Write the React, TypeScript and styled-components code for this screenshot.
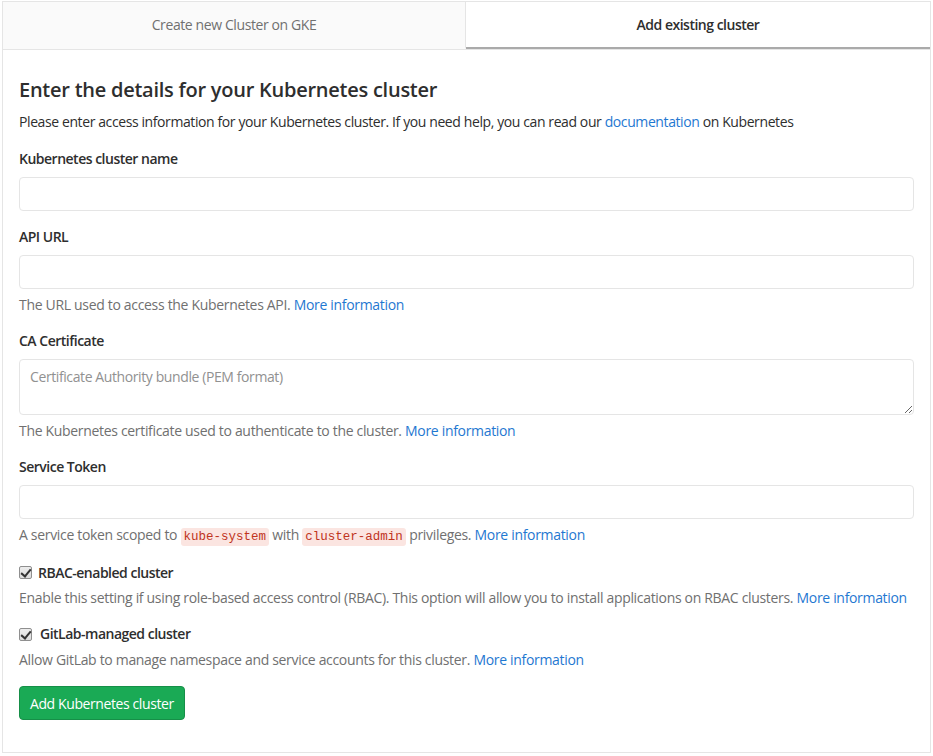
import React from "react";
import styled, { createGlobalStyle } from "styled-components";

const Global = createGlobalStyle`
  body {
    margin: 0;
    background: #fff;
    font-family: "Open Sans", "Noto Sans", sans-serif;
    letter-spacing: -0.4px;
  }
  * { box-sizing: border-box; }
`;

const Card = styled.div`
  margin: 1px 2px 0 2px;
  width: 929px;
  border: 1px solid #e5e5e5;
  background: #fff;
`;

const Tabs = styled.div`
  display: grid;
  grid-template-columns: 463px 1fr;
  border-bottom: 1px solid #e5e5e5;
`;

const Tab = styled.div<{ $active?: boolean }>`
  height: 47px;
  display: flex;
  align-items: center;
  justify-content: center;
  font-size: 14px;
  color: ${(p) => (p.$active ? "#2e2e2e" : "#707070")};
  font-weight: ${(p) => (p.$active ? 600 : 400)};
  letter-spacing: ${(p) => (p.$active ? "-0.5px" : "-0.4px")};
  background: ${(p) => (p.$active ? "#fff" : "#fafafa")};
  border-right: ${(p) => (p.$active ? "none" : "1px solid #e5e5e5")};
  border-bottom: 2px solid ${(p) => (p.$active ? "#aaaaaa" : "transparent")};
`;

const Body = styled.div`
  padding: 28px 16px 32px 16px;
`;

const Heading = styled.h4`
  margin: 0;
  font-size: 20px;
  line-height: 24px;
  font-weight: 600;
  letter-spacing: -0.25px;
  color: #2e2e2e;
`;

const Intro = styled.p`
  margin: 10px 0 17px 0;
  font-size: 14px;
  line-height: 20px;
  color: #2e2e2e;
`;

const Link = styled.a`
  color: #1f78d1;
  text-decoration: none;
`;

const Group = styled.div`
  margin-bottom: 16px;
`;

const Label = styled.label`
  display: block;
  font-size: 14px;
  line-height: 20px;
  font-weight: 600;
  letter-spacing: -0.5px;
  color: #2e2e2e;
  margin-bottom: 8px;
`;

const Input = styled.input`
  display: block;
  width: 100%;
  height: 34px;
  border: 1px solid #e5e5e5;
  border-radius: 4px;
  padding: 6px 10px;
  font-family: inherit;
  font-size: 14px;
  background: #fff;
`;

const TextArea = styled.textarea`
  display: block;
  width: 100%;
  height: 56px;
  border: 1px solid #e5e5e5;
  border-radius: 4px;
  padding: 7px 10px;
  font-family: inherit;
  font-size: 14px;
  letter-spacing: -0.4px;
  color: #2e2e2e;
  resize: vertical;
  &::placeholder { color: #919191; }
`;

const Help = styled.p`
  margin: 6px 0 0 0;
  font-size: 14px;
  line-height: 20px;
  letter-spacing: -0.32px;
  color: #707070;
`;

const Code = styled.code`
  font-family: "Liberation Mono", "DejaVu Sans Mono", monospace;
  font-size: 12.5px;
  letter-spacing: 0;
  color: #c0341d;
  background: #fbe5e1;
  border-radius: 3px;
  padding: 2px 3px;
`;

const CheckRow = styled.label<{ $gap: number; $lh: number }>`
  display: flex;
  align-items: center;
  gap: ${(p) => p.$gap}px;
  font-size: 14px;
  line-height: ${(p) => p.$lh}px;
  font-weight: 600;
  letter-spacing: -0.5px;
  color: #2e2e2e;
`;

const Check = styled.input`
  appearance: none;
  margin: 0;
  width: 13px;
  height: 13px;
  border: 1px solid #8f8f8f;
  border-radius: 2px;
  background: linear-gradient(#ededed, #dcdcdc);
  position: relative;
  &:checked::after {
    content: "";
    position: absolute;
    left: 3px;
    top: 0px;
    width: 4px;
    height: 8px;
    border: solid #333;
    border-width: 0 2px 2px 0;
    transform: rotate(40deg);
  }
`;

const Button = styled.button`
  display: inline-block;
  height: 34px;
  padding: 0 10px;
  font-family: inherit;
  font-size: 14px;
  letter-spacing: -0.4px;
  color: #fff;
  background: #1aaa55;
  border: 1px solid #168f48;
  border-radius: 4px;
`;

export default function App() {
  return (
    <>
      <Global />
      <Card>
        <Tabs>
          <Tab>Create new Cluster on GKE</Tab>
          <Tab $active>Add existing cluster</Tab>
        </Tabs>
        <Body>
          <Heading>Enter the details for your Kubernetes cluster</Heading>
          <Intro>
            Please enter access information for your Kubernetes cluster. If you need help, you can read our{" "}
            <Link href="#">documentation</Link> on Kubernetes
          </Intro>
          <Group>
            <Label>Kubernetes cluster name</Label>
            <Input type="text" />
          </Group>
          <Group>
            <Label>API URL</Label>
            <Input type="text" />
            <Help>
              The URL used to access the Kubernetes API. <Link href="#">More information</Link>
            </Help>
          </Group>
          <Group>
            <Label>CA Certificate</Label>
            <TextArea placeholder="Certificate Authority bundle (PEM format)" />
            <Help>
              The Kubernetes certificate used to authenticate to the cluster. <Link href="#">More information</Link>
            </Help>
          </Group>
          <Group>
            <Label>Service Token</Label>
            <Input type="text" />
            <Help>
              A service token scoped to <Code>kube-system</Code> with <Code>cluster-admin</Code> privileges.{" "}
              <Link href="#">More information</Link>
            </Help>
          </Group>
          <Group>
            <CheckRow $gap={6} $lh={19}>
              <Check type="checkbox" defaultChecked />
              RBAC-enabled cluster
            </CheckRow>
            <Help>
              Enable this setting if using role-based access control (RBAC). This option will allow you to install
              applications on RBAC clusters. <Link href="#">More information</Link>
            </Help>
          </Group>
          <Group>
            <CheckRow $gap={8} $lh={20}>
              <Check type="checkbox" defaultChecked />
              GitLab-managed cluster
            </CheckRow>
            <Help>
              Allow GitLab to manage namespace and service accounts for this cluster. <Link href="#">More information</Link>
            </Help>
          </Group>
          <Button>Add Kubernetes cluster</Button>
        </Body>
      </Card>
    </>
  );
}
